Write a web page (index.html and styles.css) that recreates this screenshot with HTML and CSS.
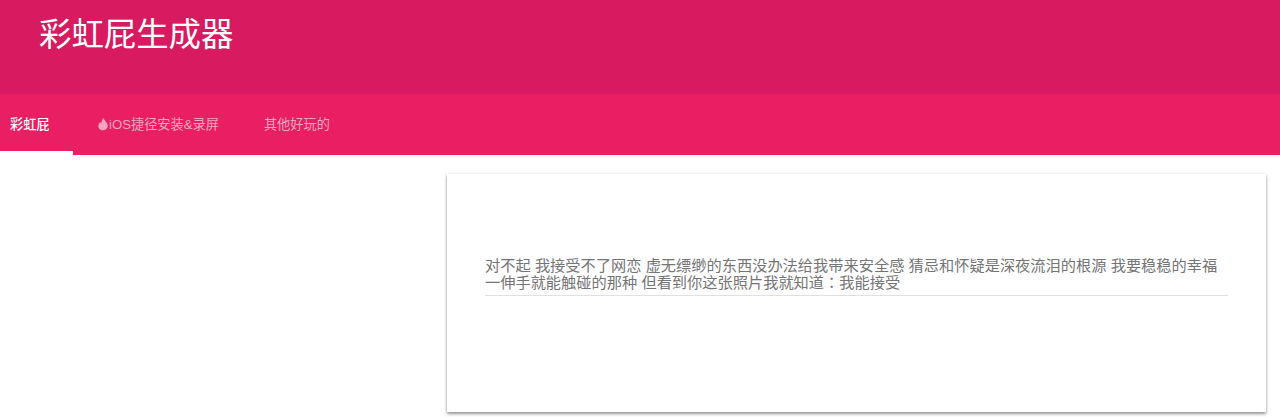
FILE: index.html
```html
<!DOCTYPE html>
<html lang="zh-CN">
<head>
<meta charset="UTF-8">
<meta name="viewport" content="width=device-width, initial-scale=1.0">
<title>彩虹屁生成器</title>
<link rel="stylesheet" href="styles.css">
</head>
<body>

<header class="top-bar">
  <h1>彩虹屁生成器</h1>
</header>

<nav class="tabs">
  <a class="tab active" href="#">彩虹屁</a>
  <a class="tab tab-ios" href="#">
    <svg class="flame" viewBox="0 0 10 13" width="10" height="14"><path d="M5.6 0.2C5.8 2.6 9.2 4.4 9.7 7.8C10 10.6 7.8 12.8 5 12.8C2.2 12.8 0.1 10.8 0.4 8C0.6 6.4 1.4 5.2 2.4 4.3C2.5 5.3 2.8 5.9 3.4 6.3C3.2 4.2 4.2 1.7 5.6 0.2Z"/></svg>iOS捷径安装&amp;录屏
  </a>
  <a class="tab tab-other" href="#">其他好玩的</a>
</nav>

<main class="content">
  <div class="card">
    <p class="compliment">对不起 我接受不了网恋 虚无缥缈的东西没办法给我带来安全感 猜忌和怀疑是深夜流泪的根源 我要稳稳的幸福 一伸手就能触碰的那种 但看到你这张照片我就知道<span class="colon" lang="zh-TW">：</span>我能接受</p>
  </div>
</main>

</body>
</html>
```

FILE: styles.css
```css
* {
  box-sizing: border-box;
}
body {
  font-family: "Liberation Sans", "Noto Sans CJK SC", sans-serif;
  background-color: #ffffff;
  margin: 0;
  overflow: hidden;
}
.top-bar {
  background-color: #d81b60;
  height: 94px;
  padding: 15px 39px 0;
}
h1 {
  color: #ffffff;
  font-size: 32.4px;
  font-weight: 400;
  line-height: 40px;
  margin: 0;
}
.tabs {
  background-color: #e91e63;
  display: flex;
  height: 61px;
}
.tab {
  color: rgba(255, 255, 255, 0.6);
  display: flex;
  align-items: center;
  font-size: 13.2px;
  padding: 0 10px 2px;
  text-decoration: none;
}
.tab.active {
  border-bottom: 4px solid #ffffff;
  color: #ffffff;
  font-weight: 500;
  padding-top: 2px;
  padding-bottom: 0;
  width: 73px;
}
.tab-ios {
  padding-left: 25px;
}
.tab-other {
  padding-left: 35px;
}
.flame {
  fill: rgba(255, 255, 255, 0.6);
  margin-right: 1px;
}
.content {
  padding: 19px 14px 5px 447px;
}
.card {
  background-color: #ffffff;
  box-shadow: 0 2px 3px rgba(0, 0, 0, 0.4), 0 0 4px rgba(0, 0, 0, 0.08);
  height: 238px;
  padding: 83px 38px 0 38px;
}
.compliment {
  border-bottom: 1px solid #e0e0e0;
  color: #757575;
  font-size: 15.22px;
  line-height: 17px;
  margin: 0;
  padding-bottom: 4px;
}
.colon {
  font-family: "Noto Sans CJK TC", sans-serif;
  line-height: 0;
}
```
